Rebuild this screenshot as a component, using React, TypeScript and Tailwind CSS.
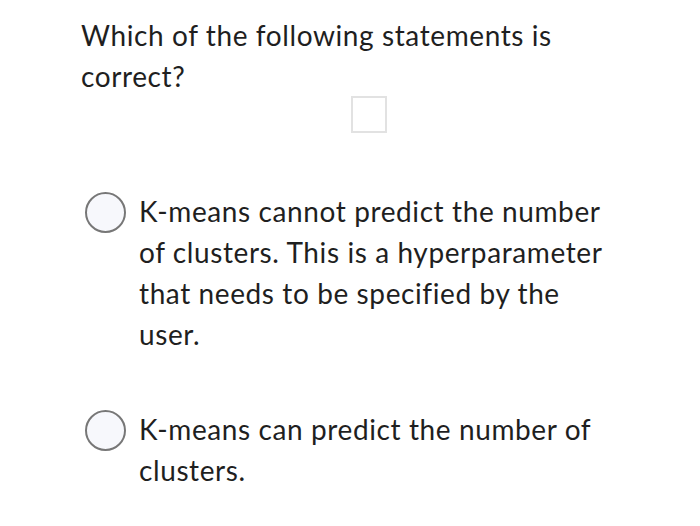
export default function App() {
  const options = [
    'K-means cannot predict the number of clusters. This is a hyperparameter that needs to be specified by the user.',
    'K-means can predict the number of clusters.',
  ];

  return (
    <div
      className="min-h-[526px] w-[700px] bg-white pl-[81px] pt-[15px] text-[28px] leading-[41px] tracking-[0.6px] text-[#1f1f1f] [font-variant-ligatures:none]"
      style={{ fontFamily: 'Lato, "Open Sans", sans-serif' }}
    >
      <div className="w-[540px]">Which of the following statements is correct?</div>
      <div className="ml-[270px] mt-[-1px] h-[37px] w-[36px] border-2 border-[#e2e2e2]" />

      <div className="mt-[58px] flex flex-col gap-[54px]">
        {options.map((text) => (
          <div key={text} className="flex items-start">
            <div className="ml-[4px] mt-[1px] h-[41px] w-[41px] shrink-0 rounded-full border-2 border-[#777777] bg-[#f7f8fc]" />
            <div className="ml-[13px] w-[480px]">{text}</div>
          </div>
        ))}
      </div>
    </div>
  );
}
